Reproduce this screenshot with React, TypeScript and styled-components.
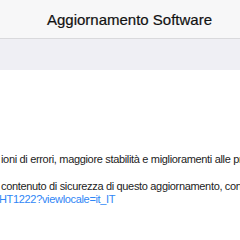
import styled, { createGlobalStyle } from 'styled-components';

const GlobalStyle = createGlobalStyle`
  html, body {
    margin: 0;
    padding: 0;
    background: #ffffff;
  }
  body {
    width: 240px;
    height: 240px;
    overflow: hidden;
    font-family: "Liberation Sans", Arial, sans-serif;
  }
`;

const Page = styled.div`
  width: 240px;
  height: 240px;
  overflow: hidden;
  display: flex;
  flex-direction: column;
  background: #ffffff;
`;

const NavBar = styled.div`
  height: 38px;
  flex-shrink: 0;
  display: flex;
  align-items: center;
  justify-content: center;
  padding-left: 19px;
  background: #f7f7f8;
  border-bottom: 1px solid #d9d9dc;
`;

const Title = styled.h1`
  margin: 0;
  font-size: 15px;
  font-weight: 400;
  color: #111111;
  white-space: nowrap;
  -webkit-text-stroke: 0.2px #111111;
`;

const GroupBand = styled.div`
  height: 31px;
  flex-shrink: 0;
  background: #efeff4;
`;

const Notes = styled.div`
  padding-top: 83px;
  display: flex;
  flex-direction: column;
  overflow: hidden;
`;

const Paragraph = styled.p`
  margin: 0 0 14px;
  display: flex;
  flex-direction: column;
`;

const Line = styled.span<{ $shift: number; $link?: boolean }>`
  display: block;
  margin-left: ${({ $shift }) => $shift}px;
  font-size: 11px;
  line-height: 13px;
  letter-spacing: -0.33px;
  white-space: nowrap;
  color: ${({ $link }) => ($link ? '#2f86f6' : '#1c1c1c')};
`;

export default function App() {
  return (
    <Page>
      <GlobalStyle />
      <NavBar>
        <Title>Aggiornamento Software</Title>
      </NavBar>
      <GroupBand />
      <Notes>
        <Paragraph>
          <Line $shift={1}>ioni di errori, maggiore stabilità e miglioramenti alle prestazioni.</Line>
        </Paragraph>
        <Paragraph>
          <Line $shift={1}>contenuto di sicurezza di questo aggiornamento, consulta il sito web:</Line>
          <Line $shift={-1} $link>HT1222?viewlocale=it_IT</Line>
        </Paragraph>
      </Notes>
    </Page>
  );
}
